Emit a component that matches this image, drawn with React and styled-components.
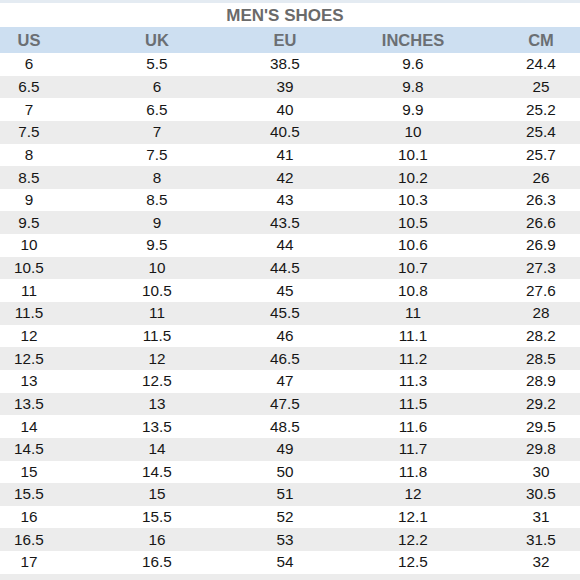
import React from "react";
import styled, { createGlobalStyle } from "styled-components";

const GlobalStyle = createGlobalStyle`
  html, body {
    margin: 0;
    padding: 0;
    background: #fff;
  }
  body {
    font-family: "Liberation Sans", Arial, sans-serif;
  }
`;

const Frame = styled.div`
  width: 580px;
  height: 580px;
  overflow: hidden;
  border-top: 3px solid #e4ebf2;
  box-sizing: border-box;
`;

const Chart = styled.div`
  width: 640px;
  margin-left: -35px;
`;

const Title = styled.div`
  height: 24px;
  line-height: 25px;
  text-align: center;
  font-size: 17px;
  font-weight: bold;
  color: #6a6a6a;
`;

const Row = styled.div`
  display: grid;
  grid-template-columns: repeat(5, 128px);
  height: ${(p) => (p.$head ? "26px" : "22.65px")};
  align-items: center;
  background: ${(p) => (p.$head ? "#cddff1" : p.$shade ? "#ececec" : "#fff")};
`;

const Cell = styled.div`
  text-align: center;
  font-size: ${(p) => (p.$head ? "16.5px" : "15.3px")};
  font-weight: ${(p) => (p.$head ? "bold" : "normal")};
  color: ${(p) => (p.$head ? "#6b6f74" : "#161616")};
  padding-top: ${(p) => (p.$head ? "1px" : "0")};
  white-space: nowrap;
`;

const columns = ["US", "UK", "EU", "INCHES", "CM"];

const sizes = [
  ["6", "5.5", "38.5", "9.6", "24.4"],
  ["6.5", "6", "39", "9.8", "25"],
  ["7", "6.5", "40", "9.9", "25.2"],
  ["7.5", "7", "40.5", "10", "25.4"],
  ["8", "7.5", "41", "10.1", "25.7"],
  ["8.5", "8", "42", "10.2", "26"],
  ["9", "8.5", "43", "10.3", "26.3"],
  ["9.5", "9", "43.5", "10.5", "26.6"],
  ["10", "9.5", "44", "10.6", "26.9"],
  ["10.5", "10", "44.5", "10.7", "27.3"],
  ["11", "10.5", "45", "10.8", "27.6"],
  ["11.5", "11", "45.5", "11", "28"],
  ["12", "11.5", "46", "11.1", "28.2"],
  ["12.5", "12", "46.5", "11.2", "28.5"],
  ["13", "12.5", "47", "11.3", "28.9"],
  ["13.5", "13", "47.5", "11.5", "29.2"],
  ["14", "13.5", "48.5", "11.6", "29.5"],
  ["14.5", "14", "49", "11.7", "29.8"],
  ["15", "14.5", "50", "11.8", "30"],
  ["15.5", "15", "51", "12", "30.5"],
  ["16", "15.5", "52", "12.1", "31"],
  ["16.5", "16", "53", "12.2", "31.5"],
  ["17", "16.5", "54", "12.5", "32"],
  ["17.5", "17", "55", "12.6", "32.3"],
];

export default function App() {
  return (
    <>
      <GlobalStyle />
      <Frame>
        <Chart>
          <Title>MEN'S SHOES</Title>
          <Row $head>
            {columns.map((c) => (
              <Cell key={c} $head>
                {c}
              </Cell>
            ))}
          </Row>
          {sizes.map((row, i) => (
            <Row key={row[0]} $shade={i % 2 === 1}>
              {row.map((v, j) => (
                <Cell key={j}>{v}</Cell>
              ))}
            </Row>
          ))}
        </Chart>
      </Frame>
    </>
  );
}
